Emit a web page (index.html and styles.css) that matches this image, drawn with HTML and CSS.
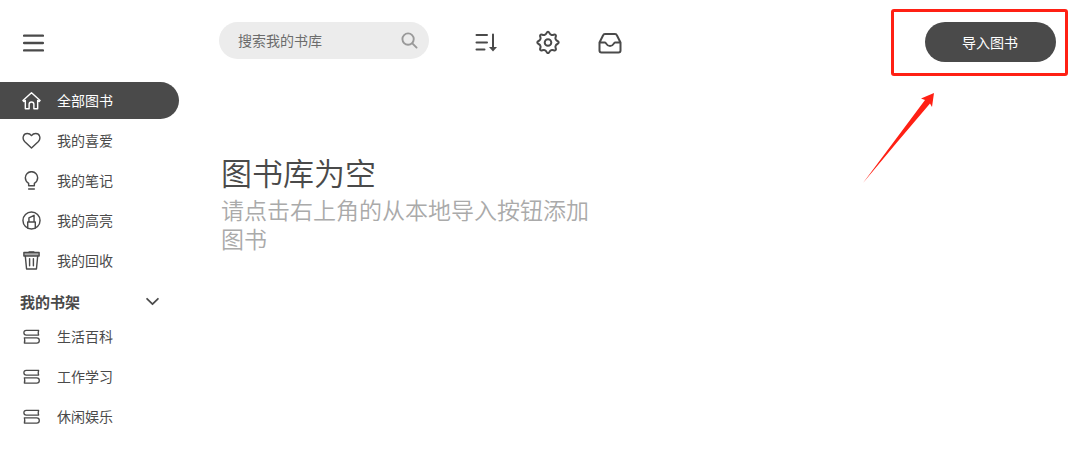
FILE: index.html
```html
<!DOCTYPE html>
<html lang="zh-CN">
<head>
<meta charset="utf-8">
<meta name="viewport" content="width=device-width, initial-scale=1">
<title>图书库</title>
<link rel="stylesheet" href="styles.css">
</head>
<body>
<div class="app">
  <aside class="sidebar">
    <div class="sidebar-top">
      <button class="icon-button" type="button" aria-label="菜单">
        <svg class="icon-menu" viewBox="0 0 20 20"><path d="M1 2.500h18M1 9.500h18M1 16.500h18"/></svg>
      </button>
    </div>
    <nav aria-label="图书">
      <ul class="menu">
        <li><a class="menu-item active" href="#" aria-current="page">
          <svg class="menu-icon" viewBox="0 0 20 20"><path d="M1 10 10 1.800 19 10l-1 1-1.500-1v8.700h-4v-4.700a2.500 2.500 0 0 0-5 0v4.700h-4V10L2 11z"/></svg>
          <span>全部图书</span></a></li>
        <li><a class="menu-item" href="#">
          <svg class="menu-icon" viewBox="0 0 20 20"><path d="M10 18 2.700 11C-.2 7.900 1.300 2.700 5.500 2.700c2 0 3.600.9 4.500 2.100.9-1.200 2.500-2.100 4.500-2.100 4.200 0 5.700 5.200 2.800 8.300z"/></svg>
          <span>我的喜爱</span></a></li>
        <li><a class="menu-item" href="#">
          <svg class="menu-icon" viewBox="0 0 20 20"><path d="M7 15.500v-2.500C5 11.800 3.500 9.800 3.500 7.200a6.500 6.500 0 0 1 13 0c0 2.600-1.500 4.600-3.500 5.800v2.500zM7 19h6"/></svg>
          <span>我的笔记</span></a></li>
        <li><a class="menu-item" href="#">
          <svg class="menu-icon" viewBox="0 0 20 20"><circle cx="10" cy="10" r="9"/><path d="M6 18v-6.500h8V18M7.300 11.500V7.300L12.700 4.500v7"/></svg>
          <span>我的高亮</span></a></li>
        <li><a class="menu-item" href="#">
          <svg class="menu-icon" viewBox="0 0 20 20"><path class="lid" d="M2 1.500h16v3.700H2z"/><path d="M7.500 1h5M3.500 5.500l1.300 13.500h10.400l1.300-13.500M8 8v7.500M12 8v7.500"/></svg>
          <span>我的回收</span></a></li>
      </ul>
      <button class="shelf-heading" type="button" aria-expanded="true">
        <span>我的书架</span>
        <svg class="chevron" viewBox="0 0 12 12"><path d="M1 3.500 6 8.500l5-5"/></svg>
      </button>
      <ul class="menu">
        <li><a class="menu-item" href="#">
          <svg class="menu-icon thin" viewBox="0 0 20 20"><path d="M17.500 3.500H4.500Q2 3.500 2 6t2.500 2.500h13q-.8-2.500 0-5zM2.500 11.500h13q2.700 0 2.700 2.700t-2.700 2.700h-13q.8-2.700 0-5.400z"/></svg>
          <span>生活百科</span></a></li>
        <li><a class="menu-item" href="#">
          <svg class="menu-icon thin" viewBox="0 0 20 20"><path d="M17.500 3.500H4.500Q2 3.500 2 6t2.500 2.500h13q-.8-2.500 0-5zM2.500 11.500h13q2.700 0 2.700 2.700t-2.700 2.700h-13q.8-2.700 0-5.400z"/></svg>
          <span>工作学习</span></a></li>
        <li><a class="menu-item" href="#">
          <svg class="menu-icon thin" viewBox="0 0 20 20"><path d="M17.500 3.500H4.500Q2 3.500 2 6t2.500 2.500h13q-.8-2.500 0-5zM2.500 11.500h13q2.700 0 2.700 2.700t-2.700 2.700h-13q.8-2.700 0-5.400z"/></svg>
          <span>休闲娱乐</span></a></li>
      </ul>
    </nav>
  </aside>
  <main class="main">
    <header class="toolbar">
      <form class="search" role="search">
        <input class="search-input" type="text" placeholder="搜索我的书库" aria-label="搜索我的书库">
        <button class="search-button" type="button" aria-label="搜索">
          <svg class="icon-search" viewBox="0 0 18 18"><circle cx="7.500" cy="7.500" r="6"/><path d="m12 12 4.500 4.500"/></svg>
        </button>
      </form>
      <div class="tools">
        <button class="icon-button" type="button" aria-label="排序">
          <svg class="icon-tool" viewBox="0 0 24 24"><path d="M2.500 5h10.500M2.500 12.500h10.500M2.500 19.500h8M19 4.500v13"/><path class="solid" d="M15 17h8l-4 4.500z"/></svg>
        </button>
        <button class="icon-button" type="button" aria-label="设置">
          <svg class="icon-tool" viewBox="-12 -12.500 24 24"><circle r="3.300"/><path d="M-3.200-7.700C-1.200-8.200-1.700-10.700 0-10.700S1.200-8.200 3.200-7.700C5-6.600 6.400-8.800 7.600-7.600S6.600-5 7.700-3.200C8.200-1.200 10.700-1.700 10.700 0S8.200 1.200 7.700 3.200C6.600 5 8.800 6.400 7.600 7.600S5 6.600 3.200 7.700C1.200 8.200 1.700 10.700 0 10.700S-1.200 8.200-3.200 7.700C-5 6.600-6.400 8.800-7.600 7.600S-6.600 5-7.700 3.200C-8.200 1.200-10.700 1.700-10.700 0S-8.200-1.200-7.700-3.200C-6.600-5-8.800-6.400-7.600-7.600S-5-6.600-3.200-7.700z"/></svg>
        </button>
        <button class="icon-button" type="button" aria-label="收件箱">
          <svg class="icon-tool" viewBox="0 0 24 24"><path d="M1.500 12.500 5 5.500Q5.500 4 7 4h10q1.500 0 2 1.500l3.500 7v8q0 2-2 2h-17q-2 0-2-2zM1.500 12.500H7c1.500 0 1 3.500 5 3.500s3.500-3.500 5-3.500h5.500"/></svg>
        </button>
      </div>
      <div class="import">
        <button class="import-button" type="button">导入图书</button>
        <div class="highlight-box"></div>
        <svg class="highlight-arrow" viewBox="0 0 72 91"><path d="M0 90 62 7 58 5.500 71 0 69 14 67 10.500Q34 49 0 90z"/></svg>
      </div>
    </header>
    <section class="empty">
      <h1 class="empty-title">图书库为空</h1>
      <p class="empty-text">请点击右上角的从本地导入按钮添加图书</p>
    </section>
  </main>
</div>
</body>
</html>
```

FILE: styles.css
```css
* { box-sizing: border-box; }

body {
  margin: 0;
  background: #fff;
  color: #4a4a4a;
  font-family: "Noto Sans CJK SC", sans-serif;
  font-size: 14px;
  font-weight: 400;
  line-height: 19px;
}

button, input {
  font: inherit;
  color: inherit;
  border: 0;
  padding: 0;
  background: none;
}

button { cursor: pointer; }

svg {
  display: block;
  flex: none;
  fill: none;
  stroke: currentColor;
  stroke-width: 2;
  stroke-linejoin: round;
  stroke-linecap: round;
}

.app {
  display: grid;
  grid-template-columns: 179px 1fr;
  min-height: 100vh;
}

.sidebar-top { padding: 33px 23px 28px; }
.icon-button { display: block; }
.icon-menu { width: 21px; height: 21px; stroke-width: 2.2; }

.menu {
  display: grid;
  gap: 3px;
  margin: 0;
  padding: 0;
  list-style: none;
}

.menu-item {
  display: flex;
  align-items: center;
  gap: 16px;
  height: 37px;
  padding-left: 22px;
  border-radius: 0 19px 19px 0;
  color: inherit;
  text-decoration: none;
}

.menu-item.active { background: #4a4a4a; color: #fff; }
.menu-icon { width: 19px; height: 19px; stroke-width: 1.5; }
.menu-icon.thin { stroke-width: 1.4; }
.lid { fill: #aaa; }

.shelf-heading {
  display: flex;
  align-items: center;
  justify-content: space-between;
  width: 100%;
  height: 39px;
  padding: 6px 20px 0;
  font-size: 15px;
  font-weight: 700;
}

.chevron { width: 13px; height: 13px; stroke-width: 1.6; }

.main { padding: 22px 24px 22px 40px; }

.toolbar {
  display: flex;
  align-items: center;
  height: 40px;
}

.search {
  display: flex;
  align-items: center;
  align-self: flex-start;
  width: 210px;
  height: 37px;
  padding: 0 11px 0 19px;
  border-radius: 19px;
  background: #ececec;
}

.search-input {
  flex: 1;
  min-width: 0;
  outline: 0;
}

.search-input::placeholder { color: #6c6c6c; opacity: 1; }
.icon-search { width: 17px; height: 17px; color: #999; }

.tools {
  display: flex;
  gap: 38px;
  margin-left: 45px;
}

.icon-tool { width: 24px; height: 24px; stroke-width: 2; }
.solid { fill: currentColor; stroke: none; }

.import { position: relative; margin-left: auto; }

.import-button {
  height: 40px;
  padding: 0 38px 0 37px;
  border-radius: 20px;
  background: #4a4a4a;
  color: #fff;
}

.highlight-box {
  position: absolute;
  inset: -13px -12px -14px -34px;
  border: 3px solid #ff2014;
  border-radius: 3px;
  pointer-events: none;
}

.highlight-arrow {
  position: absolute;
  top: 71px;
  right: 121px;
  width: 72px;
  height: 91px;
  fill: #ff2014;
  stroke: none;
  pointer-events: none;
}

.empty {
  max-width: 375px;
  padding: 90px 0 0 2px;
}

.empty-title {
  margin: 0;
  font-size: 31px;
  font-weight: 350;
  line-height: 40px;
}

.empty-text {
  margin: 3px 0 0;
  color: #aaa;
  font-size: 23px;
  font-weight: 350;
  line-height: 29px;
}
```
